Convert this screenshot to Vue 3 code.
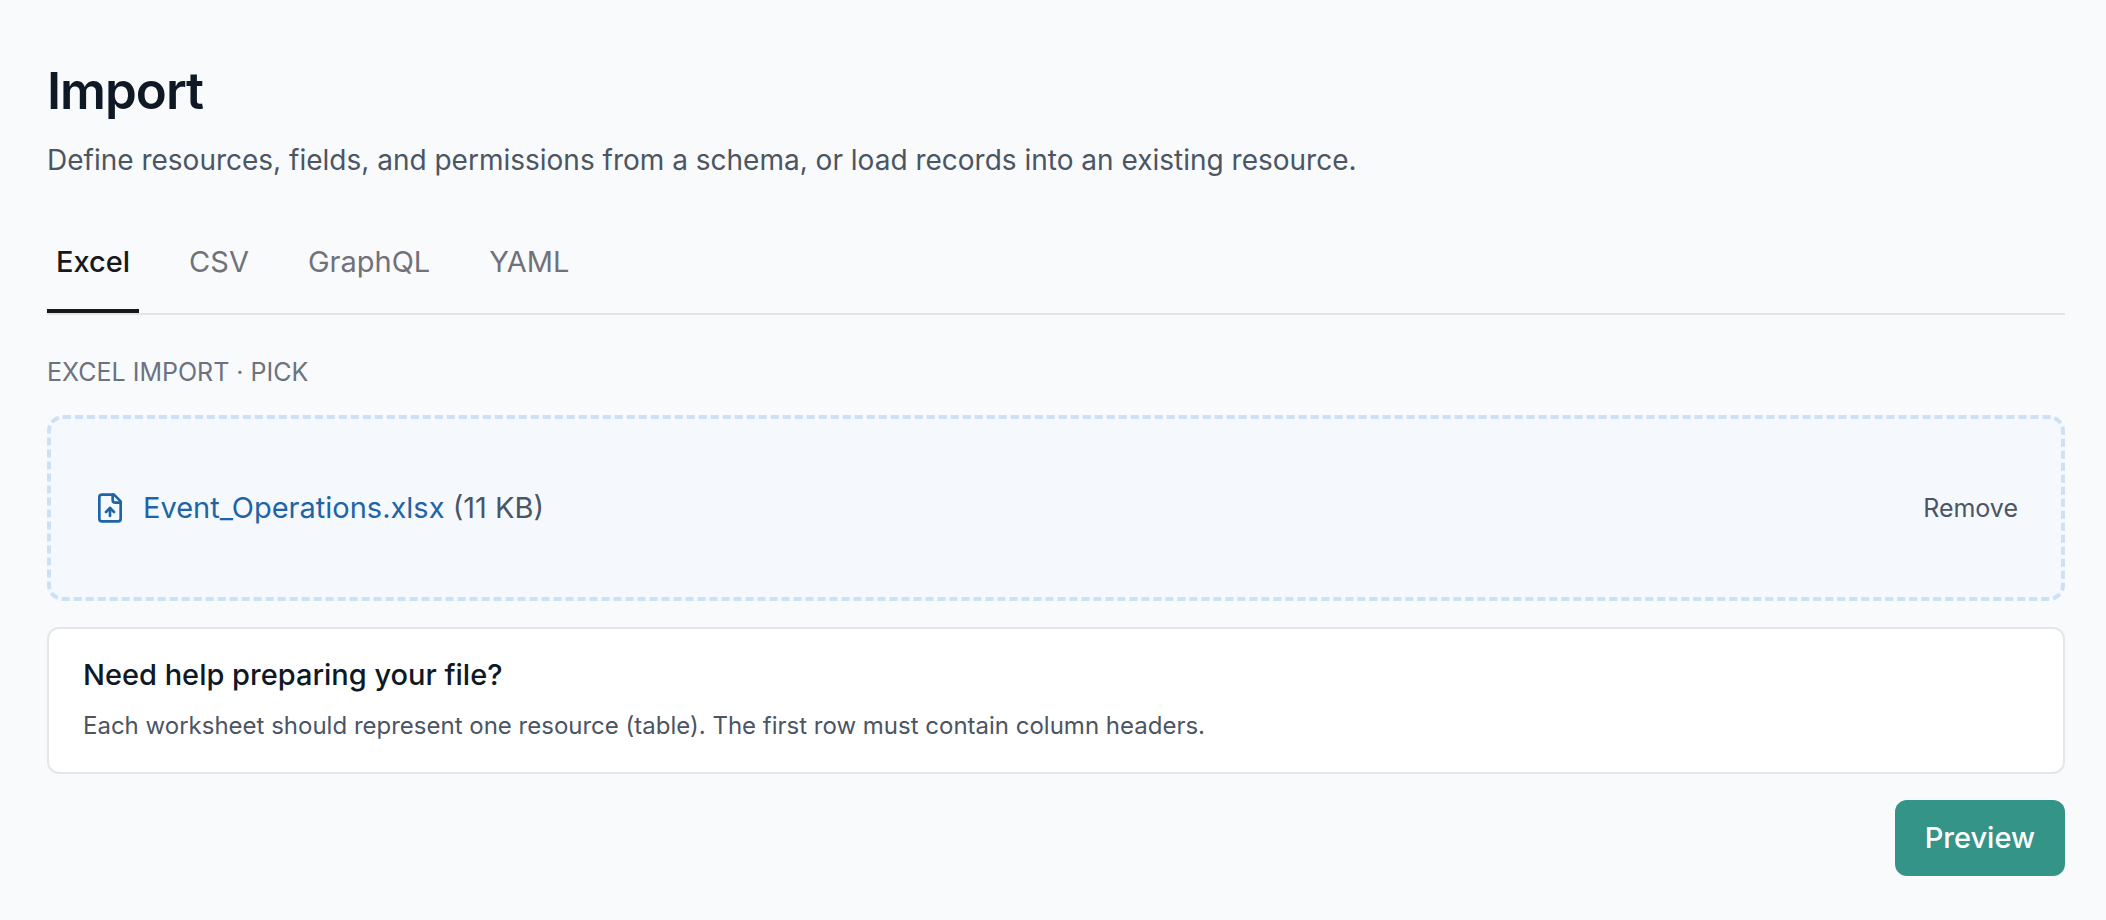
<template>
  <main class="import-page">
    <header class="page-header">
      <h1>Import</h1>
      <p>Define resources, fields, and permissions from a schema, or load records into an existing resource.</p>
    </header>

    <div class="tabs" role="tablist">
      <button
        v-for="tab in tabs"
        :key="tab"
        type="button"
        role="tab"
        class="tab"
        :class="{ active: tab === activeTab }"
        :aria-selected="tab === activeTab"
        @click="activeTab = tab"
      >{{ tab }}</button>
    </div>

    <h2 class="step-label">{{ activeTab }} import · {{ step }}</h2>

    <section class="dropzone">
      <template v-if="file">
        <svg class="file-icon" viewBox="0 0 24 24" aria-hidden="true">
          <path d="M15 2H6a2 2 0 0 0-2 2v16a2 2 0 0 0 2 2h12a2 2 0 0 0 2-2V7Z" />
          <path d="M14 2v4a2 2 0 0 0 2 2h4" />
          <path d="M12 12v6" />
          <path d="m15 15-3-3-3 3" />
        </svg>
        <p class="file-info"><span class="file-name">{{ file.name }}</span> ({{ file.size }})</p>
        <button type="button" class="remove-btn" @click="file = null">Remove</button>
      </template>
    </section>

    <section class="help-card">
      <h3>Need help preparing your file?</h3>
      <p>Each worksheet should represent one resource (table). The first row must contain column headers.</p>
    </section>

    <div class="actions">
      <button type="button" class="preview-btn" :disabled="!file">Preview</button>
    </div>
  </main>
</template>

<script setup>
import { ref } from 'vue';

const tabs = ['Excel', 'CSV', 'GraphQL', 'YAML'];
const activeTab = ref('Excel');
const step = ref('pick');
const file = ref({ name: 'Event_Operations.xlsx', size: '11 KB' });
</script>

<style>
body { margin: 0; background: #f9fafc; }
</style>

<style scoped>
.import-page {
  box-sizing: border-box;
  min-height: 100vh;
  padding: 59px 41px 44px 47px;
  background: #f9fafc;
  color: #4b5563;
  font-family: Inter, "Liberation Sans", sans-serif;
  font-size: 29px;
  line-height: 40px;
}
h1, h2, h3, p { margin: 0; font-weight: 400; }
button { padding: 0; border: 0; background: none; color: inherit; font: inherit; cursor: pointer; }

h1 { color: #0f1926; font-size: 51px; font-weight: 600; line-height: 64px; letter-spacing: -1px; }
.page-header p { margin-top: 17px; font-size: 28px; }

.tabs { display: flex; gap: 41px; margin-top: 40px; border-bottom: 2px solid #e4e4e7; }
.tab { padding: 22px 9px 27px; border-bottom: 4px solid transparent; color: #71717a; }
.tab.active { border-bottom-color: #18181b; color: #18181b; font-weight: 500; }

.step-label { margin-top: 39px; color: #6b7280; font-size: 25px; line-height: 36px; text-transform: uppercase; }

.dropzone {
  display: flex;
  align-items: center;
  box-sizing: border-box;
  min-height: 186px;
  margin-top: 25px;
  padding: 0 43px;
  border: 4px dashed #cce1f5;
  border-radius: 16px;
  background: #f5f8fd;
}
.file-icon {
  width: 32px;
  height: 32px;
  margin-right: 17px;
  fill: none;
  stroke: #1d65a6;
  stroke-width: 2;
  stroke-linecap: round;
  stroke-linejoin: round;
}
.file-name { color: #1d65a6; }
.remove-btn { margin-left: auto; font-size: 25px; }

.help-card {
  margin-top: 26px;
  padding: 26px 34px;
  border: 2px solid #e4e6e9;
  border-radius: 12px;
  background: #fff;
}
.help-card h3 { color: #0f1926; font-size: 29px; font-weight: 500; }
.help-card p { margin-top: 11px; font-size: 24px; }

.actions { display: flex; justify-content: flex-end; margin-top: 26px; }
.preview-btn { padding: 18px 30px; border-radius: 12px; background: #359488; color: #fff; font-weight: 500; }
</style>
